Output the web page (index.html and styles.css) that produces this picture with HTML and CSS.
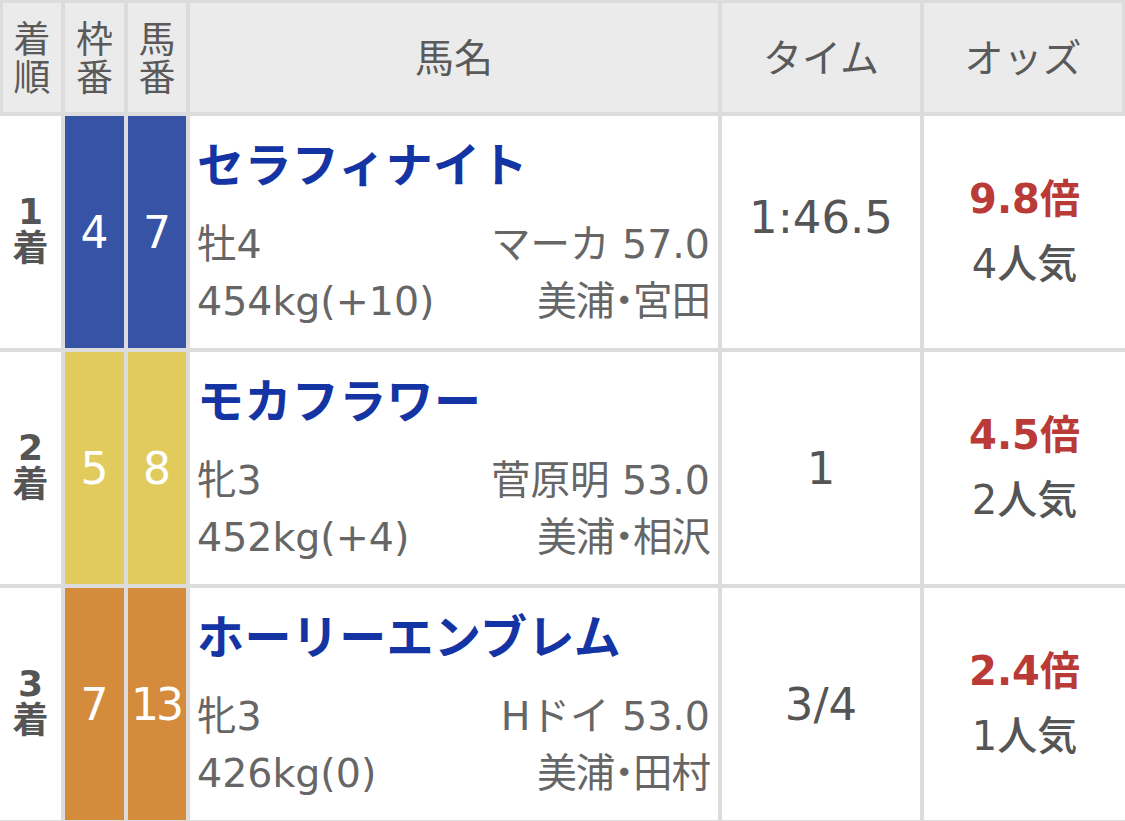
FILE: index.html
```html
<!DOCTYPE html>
<html lang="ja">
<head>
<meta charset="utf-8">
<title>レース結果</title>
<link rel="stylesheet" href="styles.css">
</head>
<body>
<div class="results">
  <div class="row head">
    <div class="cell h-rank"><span class="hl">着</span><span class="hl">順</span></div>
    <div class="cell h-waku"><span class="hl">枠</span><span class="hl">番</span></div>
    <div class="cell h-uma"><span class="hl">馬</span><span class="hl">番</span></div>
    <div class="cell h-name">馬名</div>
    <div class="cell h-time">タイム</div>
    <div class="cell h-odds">オッズ</div>
  </div>

  <div class="row">
    <div class="cell rank"><span class="rl">1</span><span class="rl">着</span></div>
    <div class="cell frame f-blue">4</div>
    <div class="cell frame f-blue">7</div>
    <div class="cell horse">
      <div class="name">セラフィナイト</div>
      <div class="meta"><span>牡4</span><span>マーカ 57.0</span></div>
      <div class="meta"><span>454kg(+10)</span><span class="stable">美浦・宮田</span></div>
    </div>
    <div class="cell time first">1:46.5</div>
    <div class="cell odds"><div class="odd">9.8倍</div><div class="pop">4人気</div></div>
  </div>

  <div class="row">
    <div class="cell rank"><span class="rl">2</span><span class="rl">着</span></div>
    <div class="cell frame f-yellow">5</div>
    <div class="cell frame f-yellow">8</div>
    <div class="cell horse">
      <div class="name">モカフラワー</div>
      <div class="meta"><span>牝3</span><span>菅原明 53.0</span></div>
      <div class="meta"><span>452kg(+4)</span><span class="stable">美浦・相沢</span></div>
    </div>
    <div class="cell time">1</div>
    <div class="cell odds"><div class="odd">4.5倍</div><div class="pop">2人気</div></div>
  </div>

  <div class="row">
    <div class="cell rank"><span class="rl">3</span><span class="rl">着</span></div>
    <div class="cell frame f-orange">7</div>
    <div class="cell frame f-orange two">13</div>
    <div class="cell horse">
      <div class="name">ホーリーエンブレム</div>
      <div class="meta"><span>牝3</span><span>Hドイ 53.0</span></div>
      <div class="meta"><span>426kg(0)</span><span class="stable">美浦・田村</span></div>
    </div>
    <div class="cell time">3/4</div>
    <div class="cell odds"><div class="odd">2.4倍</div><div class="pop">1人気</div></div>
  </div>
</div>
</body>
</html>
```

FILE: styles.css
```css
* { box-sizing: border-box; }

html, body {
  margin: 0;
  padding: 0;
  background: #ffffff;
}

body {
  font-family: "DejaVu Sans", "Noto Sans CJK JP", sans-serif;
  color: #555555;
}

.results {
  width: 1125px;
}

.row {
  display: grid;
  grid-template-columns: 65px 63px 62px 532px 202px 201px;
  border-bottom: 4px solid #dcdcdc;
}

.cell {
  border-right: 4px solid #dcdcdc;
  display: flex;
  align-items: center;
  justify-content: center;
  text-align: center;
}

.row > .cell:last-child {
  border-right: 0;
}

/* header */
.head {
  border-top: 3px solid #dcdcdc;
  height: 116px;
}

.head .cell {
  background: #ebebeb;
  font-family: "DejaVu Sans", "Noto Sans CJK JP", sans-serif;
  font-size: 37px;
  font-weight: 400;
  line-height: 39px;
  color: #5a5a5a;
}

.head .h-name,
.head .h-time,
.head .h-odds {
  font-size: 39px;
  padding-top: 2px;
}

.head .h-rank,
.head .h-waku,
.head .h-uma {
  flex-direction: column;
  padding-top: 2px;
}

.hl {
  display: block;
  height: 38px;
}

.head .h-rank {
  border-left: 3px solid #dcdcdc;
}

.head > .cell:last-child {
  border-right: 3px solid #dcdcdc;
}

/* body */
.row:not(.head) {
  height: 236px;
}

.rank {
  flex-direction: column;
  font-size: 36px;
  line-height: 38px;
  font-weight: 700;
  color: #555555;
  padding-bottom: 4px;
}

.rl {
  display: block;
  height: 37px;
}

.frame {
  color: #ffffff;
  font-size: 44px;
  font-weight: 400;
}

.frame.two {
  letter-spacing: -3px;
  padding-right: 2px;
}

.f-blue { background: #3653a5; }
.f-yellow { background: #e0cb5c; }
.f-orange { background: #d48b3b; }

.horse {
  display: block;
  text-align: left;
  padding: 16px 8px 18px 7px;
}

.name {
  font-family: "Noto Sans CJK JP", sans-serif;
  font-size: 47px;
  font-weight: 700;
  line-height: 60px;
  color: #1434a4;
  white-space: nowrap;
  margin-bottom: 24px;
  letter-spacing: 0.4px;
}

.meta {
  display: flex;
  justify-content: space-between;
  font-size: 39.5px;
  line-height: 57px;
  color: #666666;
  white-space: nowrap;
}

.stable {
  font-feature-settings: "palt";
  letter-spacing: -1px;
}

.time {
  font-size: 45px;
  color: #555555;
}

.time.first {
  padding-bottom: 30px;
}

.odds {
  flex-direction: column;
}

.odd {
  font-size: 40px;
  font-weight: 700;
  line-height: 65px;
  color: #b93a36;
}

.pop {
  font-size: 40px;
  font-weight: 500;
  line-height: 65px;
  color: #555555;
}
```
